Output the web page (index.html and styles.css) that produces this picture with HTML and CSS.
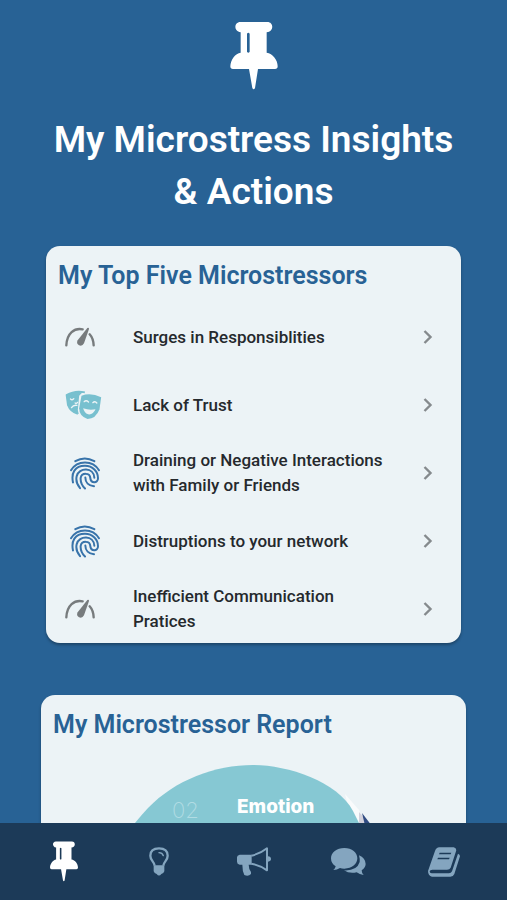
FILE: index.html
```html
<!DOCTYPE html>
<html lang="en">
<head>
<meta charset="utf-8">
<meta name="viewport" content="width=device-width, initial-scale=1">
<title>My Microstress Insights &amp; Actions</title>
<link rel="stylesheet" href="styles.css">
</head>
<body>
<svg class="defs" aria-hidden="true">
  <symbol id="pin" viewBox="60 37 142 204">
    <path fill-rule="evenodd" d="M90 37H171C191 37 191 66 169 68V129C187 132 202 150 202 170Q202 178 194 178H143L134 235Q130 243 126 235L116 178H68Q60 178 60 170C61 150 75 131 91 129V68C70 66 70 37 90 37ZM110 72V126Q114 132 118 126V72Q114 66 110 72Z"/>
  </symbol>
  <symbol id="gauge" viewBox="0 0 90 60">
    <g fill="none" stroke="currentColor" stroke-width="7" stroke-linecap="round"><path d="M4 55C6 18 28 2 53 7M74 22Q85 34 86 55"/></g>
    <path d="M67 3Q72 1 72 6L57 49Q52 59 42 55Q33 50 38 40Z"/>
  </symbol>
  <symbol id="masks" viewBox="0 0 110 90">
    <path fill="none" stroke="currentColor" stroke-width="5" stroke-linejoin="round" d="M59 7Q30 0 4 15L8 45Q16 66 38 72"/>
    <path d="M4 14Q28 1 58 6Q48 8 42 17L38 60Q39 66 41 72Q15 66 7 45Z"/>
    <path d="M49 17Q77 6 108 22L103 58Q92 87 67 87Q42 79 42 55Z"/>
    <g fill="none" stroke="#ecf3f6" stroke-width="4" stroke-linecap="round"><path d="M16 27Q21 32 26 26M30 39Q34 42 37 37M19 53Q25 44 35 46M57 35Q63 29 70 36M83 38Q89 32 95 39"/></g>
    <path fill="#ecf3f6" d="M54 55Q72 62 91 58Q84 75 69 73Q57 69 54 55Z"/>
  </symbol>
  <symbol id="fingerprint" viewBox="0 0 90 98">
    <g fill="none" stroke="currentColor" stroke-width="6" stroke-linecap="round"><path d="M16 12Q44-4 73 12M3 39C22 8 68 8 87 39M9 76C3 48 14 26 45 26C68 26 84 43 84 63C84 80 62 79 61 63C60 46 35 46 32 62C31 74 35 84 45 94M30 93C19 80 18 66 20 57C26 30 72 29 73 62M46 61C46 76 56 86 72 87"/></g>
  </symbol>
  <symbol id="chevron" viewBox="0 0 10 14"><path fill="none" stroke="currentColor" stroke-width="2.4" d="M1.5 1L7.5 7L1.5 13"/></symbol>
</svg>

<div class="app">
  <main class="content">
    <header class="hero">
      <svg class="hero-pin" aria-hidden="true"><use href="#pin"/></svg>
      <h1>My Microstress Insights &amp; Actions</h1>
    </header>

    <section class="card card-list" aria-labelledby="top-five">
      <h2 id="top-five">My Top Five Microstressors</h2>
      <ul>
        <li><a class="row" href="#surges"><span class="row-icon grey"><svg class="gauge"><use href="#gauge"/></svg></span><span class="row-text">Surges in Responsiblities</span><svg class="chevron"><use href="#chevron"/></svg></a></li>
        <li><a class="row" href="#trust"><span class="row-icon teal"><svg class="masks"><use href="#masks"/></svg></span><span class="row-text">Lack of Trust</span><svg class="chevron"><use href="#chevron"/></svg></a></li>
        <li><a class="row" href="#family"><span class="row-icon blue"><svg class="print"><use href="#fingerprint"/></svg></span><span class="row-text">Draining or Negative Interactions with Family or Friends</span><svg class="chevron"><use href="#chevron"/></svg></a></li>
        <li><a class="row" href="#network"><span class="row-icon blue"><svg class="print"><use href="#fingerprint"/></svg></span><span class="row-text">Distruptions to your network</span><svg class="chevron"><use href="#chevron"/></svg></a></li>
        <li><a class="row" href="#communication"><span class="row-icon grey"><svg class="gauge"><use href="#gauge"/></svg></span><span class="row-text">Inefficient Communication Pratices</span><svg class="chevron"><use href="#chevron"/></svg></a></li>
      </ul>
    </section>

    <section class="card card-report" aria-labelledby="report">
      <h2 id="report">My Microstressor Report</h2>
      <svg class="chart" viewBox="0 0 270 120" role="img" aria-label="Emotion segment">
        <path fill="#f9fbfc" d="M226 44L240 60L248 80H235Z"/>
        <path fill="#d3d2dc" d="M240 62L247 70V90H240Z"/>
        <path fill="#304b82" d="M243 63L253 76L262 92H250Z"/>
        <path fill="#86c8d3" d="M0 94Q15 73 29 58C56 30 96 15 134 15C168 15 218 31 234 61L241 75L248 94V120H0Z"/>
        <text class="num" x="53" y="68">02</text>
        <text class="label" x="118" y="63">Emotion</text>
      </svg>
    </section>
  </main>

  <nav class="tabs" aria-label="Main">
    <a class="active" href="#insights" aria-label="Insights"><svg class="tab-pin"><use href="#pin"/></svg></a>
    <a href="#ideas" aria-label="Ideas">
      <svg width="20" height="29" viewBox="0 0 60 87"><path fill="none" stroke="currentColor" stroke-width="7" d="M17 56C16 44 4 41 4 26C4 11 15 4 30 4S56 11 56 26C56 41 44 44 43 56"/><path fill="none" stroke="currentColor" stroke-width="4" stroke-linecap="round" d="M30 17Q40 17 43 26"/><path d="M14 55H46V73Q44 79 37 81Q30 90 23 81Q16 79 14 73Z"/></svg>
    </a>
    <a href="#announcements" aria-label="Announcements">
      <svg width="34" height="29" viewBox="0 0 102 87"><path d="M8 23H44V53H35Q35 65 42 75V81Q34 90 22 84Q16 72 16 53H8Q0 51 0 44V31Q0 25 8 23Z"/><path fill="none" stroke="currentColor" stroke-width="6" stroke-linejoin="round" d="M43 26Q69 21 90 4V70Q67 54 43 50"/><path d="M93 28Q102 29 102 36T93 44Z"/></svg>
    </a>
    <a href="#messages" aria-label="Messages">
      <svg width="35" height="28" viewBox="0 0 105 84"><path d="M40 0C63 0 79 14 79 31S63 62 40 62Q32 62 27 60Q18 66 7 66Q13 61 14 55Q0 46 0 31C0 14 17 0 40 0Z"/><path d="M84 22Q103 30 104 48Q103 60 92 67Q92 76 98 81Q88 81 77 73Q55 78 39 67Q78 69 86 42Q87 32 84 22Z"/></svg>
    </a>
    <a href="#journal" aria-label="Journal">
      <svg width="32" height="30" viewBox="0 0 96 90"><path fill-rule="evenodd" d="M34 1H77Q87 3 84 13L68 62Q65 68 57 68H13Q6 68 5 73Q5 79 11 79H63Q69 79 72 73L90 20Q98 23 95 31L79 81Q76 89 67 89H12Q0 86 0 72L21 12Q25 1 34 1ZM35 17L33 22H68L70 17ZM30 32L28 37H63L65 32Z"/></svg>
    </a>
  </nav>
</div>
</body>
</html>
```

FILE: styles.css
```css
* { box-sizing: border-box; }
body { margin: 0; background: #286295; color: #25292d; font-family: Roboto, "Liberation Sans", sans-serif; }
h1, h2, ul { margin: 0; padding: 0; }
ul { list-style: none; }
a { color: inherit; text-decoration: none; }
svg { display: block; fill: currentColor; flex: none; }
.defs { position: absolute; width: 0; height: 0; }

.app { display: flex; flex-direction: column; height: 100vh; }
.content { flex: 1; min-height: 0; overflow-y: auto; scrollbar-width: none; }

.hero { display: flex; flex-direction: column; align-items: center; padding: 22px 40px 0; color: #fff; }
.hero-pin { width: 48px; height: 68px; }
h1 { margin-top: 24px; font-size: 37px; line-height: 52px; font-weight: 600; text-align: center; }

.card { background: #ecf3f6; border-radius: 14px; box-shadow: 0 2px 3px rgba(0, 0, 0, 0.3); }
.card h2 { padding: 13px 12px 0; font-size: 25px; line-height: 34px; font-weight: 600; color: #286295; }
.card-list { margin: 28px 46px 0; }
.card-list ul { padding-top: 10px; }
.row { display: flex; align-items: center; height: 68px; padding: 0 28px 0 19px; }
.row-icon { display: flex; align-items: center; width: 68px; flex: none; }
.row-text { flex: 1; font-size: 17px; line-height: 25px; font-weight: 500; padding-right: 32px; }
.grey { color: #777b7d; }
.teal { color: #78c0cf; }
.blue { color: #3873aa; }
.gauge { width: 30px; height: 20px; }
.masks { width: 37px; height: 30px; }
.print { width: 30px; height: 33px; margin-left: 5px; }
.chevron { width: 10px; height: 14px; color: #858a8d; }

.card-report { margin: 52px 41px 40px; padding-bottom: 24px; }
.chart { width: 270px; height: 120px; margin: 8px auto 0; }
.num { font: 200 22px Inter, sans-serif; fill: #b1dce3; }
.label { font: 800 19px Inter, sans-serif; fill: #fff; }

.tabs { display: flex; align-items: center; height: 77px; padding: 0 16px; background: #1c3a58; color: #84a5bf; }
.tabs a { flex: 1; display: flex; justify-content: center; }
.tabs .active { color: #fff; }
.tab-pin { width: 28px; height: 41px; }
```
